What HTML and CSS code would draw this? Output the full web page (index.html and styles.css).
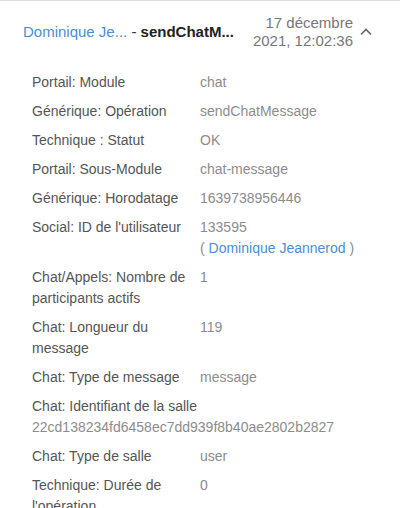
FILE: index.html
```html
<!DOCTYPE html>
<html lang="fr">
<head>
<meta charset="utf-8">
<link rel="stylesheet" href="styles.css">
</head>
<body>
<div class="entry">
  <div class="entry-head">
    <div class="title" title="Dominique Jeannerod - sendChatMessage"><span class="user">Dominique Je...</span> - <span class="op">sendChatM...</span></div>
    <div class="date">17 décembre<br>2021, 12:02:36</div>
    <svg class="chev" width="14" height="14" viewBox="0 0 14 14"><path d="M2 9.5 L7 4.5 L12 9.5" fill="none" stroke="#666" stroke-width="1.6"/></svg>
  </div>
  <div class="props">
    <div class="row"><div class="k">Portail: Module</div><div class="v">chat</div></div>
    <div class="row"><div class="k">Générique: Opération</div><div class="v">sendChatMessage</div></div>
    <div class="row"><div class="k">Technique : Statut</div><div class="v">OK</div></div>
    <div class="row"><div class="k">Portail: Sous-Module</div><div class="v">chat-message</div></div>
    <div class="row"><div class="k">Générique: Horodatage</div><div class="v">1639738956446</div></div>
    <div class="row"><div class="k">Social: ID de l'utilisateur</div><div class="v">133595<br>( <a class="link">Dominique Jeannerod</a> )</div></div>
    <div class="row"><div class="k">Chat/Appels: Nombre de participants actifs</div><div class="v">1</div></div>
    <div class="row"><div class="k">Chat: Longueur du message</div><div class="v">119</div></div>
    <div class="row"><div class="k">Chat: Type de message</div><div class="v">message</div></div>
    <div class="row"><div class="k">Chat: Identifiant de la salle</div><div class="v">22cd138234fd6458ec7dd939f8b40ae2802b2827</div></div>
    <div class="row"><div class="k">Chat: Type de salle</div><div class="v">user</div></div>
    <div class="row"><div class="k">Technique: Durée de l'opération</div><div class="v">0</div></div>
  </div>
</div>
</body>
</html>
```
FILE: styles.css
```css
html, body {
  margin: 0;
  padding: 0;
  background: #fff;
  font-family: "Liberation Sans", Arial, sans-serif;
}
.entry {
  border-top: 1px solid #dcdcdc;
}
.entry-head {
  display: flex;
  align-items: center;
  padding: 13px 27px 0 23px;
  font-size: 15px;
}
.title {
  flex: 1;
  min-width: 0;
  white-space: nowrap;
  overflow: hidden;
  line-height: 18px;
  color: #333;
}
.user {
  color: #4a8ed6;
}
.op {
  color: #222;
  font-weight: bold;
}
.date {
  text-align: right;
  color: #777;
  line-height: 18px;
}
.chev {
  margin-left: 6px;
}
.props {
  padding: 18px 32px 0 32px;
  font-size: 14px;
  line-height: 21px;
}
.row {
  display: flex;
  flex-wrap: wrap;
  padding: 4px 0;
}
.k {
  flex: 0 0 168px;
  color: #555;
}
.v {
  flex: 1 1 auto;
  color: #8c8c8c;
}
.link {
  color: #4a8ed6;
}
```
